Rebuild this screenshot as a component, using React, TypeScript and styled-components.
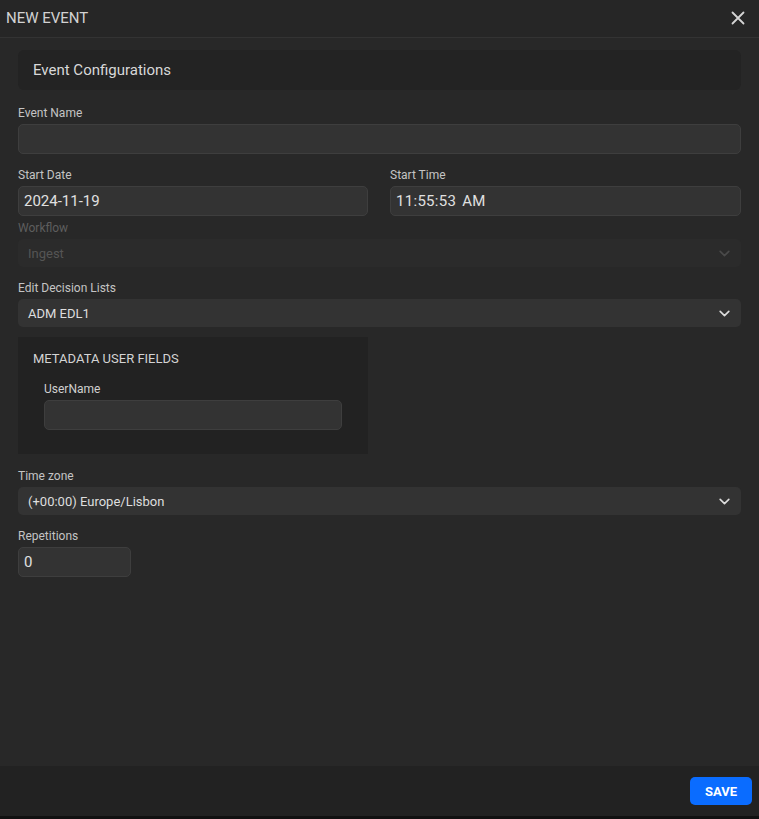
import React, { useState } from "react";
import styled, { createGlobalStyle } from "styled-components";

const GlobalStyle = createGlobalStyle`
  html, body {
    margin: 0;
    padding: 0;
    background: #282828;
    font-family: Roboto, "Liberation Sans", Arial, sans-serif;
  }
  * { box-sizing: border-box; }
`;

const Chevron: React.FC<{ color?: string }> = ({ color = "#ddd" }) => (
  <svg width="13" height="13" viewBox="0 0 24 24" fill="none">
    <path
      d="M4 8l8 8 8-8"
      stroke={color}
      strokeWidth="3"
      strokeLinecap="round"
      strokeLinejoin="round"
    />
  </svg>
);

const App: React.FC = () => {
  const [eventName, setEventName] = useState("");
  const [userName, setUserName] = useState("");
  const [repetitions, setRepetitions] = useState("0");

  return (
    <Modal>
      <GlobalStyle />
      <Header>
        <Title>NEW EVENT</Title>
        <CloseButton aria-label="close">
          <svg width="14" height="14" viewBox="0 0 14 14">
            <path
              d="M1.5 1.5l11 11M12.5 1.5l-11 11"
              stroke="#d4d4d4"
              strokeWidth="1.8"
              strokeLinecap="round"
            />
          </svg>
        </CloseButton>
      </Header>

      <Body>
        <SectionCard>Event Configurations</SectionCard>

        <Field $top={15}>
          <Label>Event Name</Label>
          <Input
            value={eventName}
            onChange={(e) => setEventName(e.target.value)}
          />
        </Field>

        <Row>
          <Field $top={13}>
            <Label>Start Date</Label>
            <Input defaultValue="2024-11-19" />
          </Field>
          <Field $top={13}>
            <Label>Start Time</Label>
            <Input defaultValue="11:55:53 AM" $spaced />
          </Field>
        </Row>

        <Field $top={4}>
          <Label $disabled>Workflow</Label>
          <Select $disabled>
            <span>Ingest</span>
            <Chevron color="#4a4a4a" />
          </Select>
        </Field>

        <Field $top={13}>
          <Label>Edit Decision Lists</Label>
          <Select>
            <span>ADM EDL1</span>
            <Chevron />
          </Select>
        </Field>

        <MetaBox>
          <MetaTitle>METADATA USER FIELDS</MetaTitle>
          <MetaField>
            <Label $light>UserName</Label>
            <Input
              value={userName}
              onChange={(e) => setUserName(e.target.value)}
            />
          </MetaField>
        </MetaBox>

        <Field $top={14}>
          <Label>Time zone</Label>
          <Select>
            <span>(+00:00) Europe/Lisbon</span>
            <Chevron />
          </Select>
        </Field>

        <Field $top={13} $width={113}>
          <Label>Repetitions</Label>
          <Input
            value={repetitions}
            onChange={(e) => setRepetitions(e.target.value)}
          />
        </Field>
      </Body>

      <Footer>
        <SaveButton type="button">SAVE</SaveButton>
      </Footer>
      <BottomStrip />
    </Modal>
  );
};

export default App;

const Modal = styled.div`
  width: 759px;
  height: 819px;
  display: flex;
  flex-direction: column;
  background: #282828;
  overflow: hidden;
`;

const Header = styled.div`
  height: 38px;
  flex-shrink: 0;
  display: flex;
  align-items: center;
  justify-content: space-between;
  padding: 0 14px 0 6px;
  background: #262626;
  border-bottom: 1px solid #333333;
`;

const Title = styled.div`
  color: #d2d2d2;
  font-size: 15px;
  font-weight: 400;
  margin-top: -2px;
`;

const CloseButton = styled.button`
  background: none;
  border: none;
  padding: 0;
  display: flex;
  cursor: pointer;
  margin-top: -2px;
`;

const Body = styled.div`
  flex: 1;
  display: flex;
  flex-direction: column;
  padding: 12px 18px 0 18px;
`;

const SectionCard = styled.div`
  height: 40px;
  display: flex;
  align-items: center;
  padding-left: 15px;
  background: #232323;
  border-radius: 6px;
  color: #d8d8d8;
  font-size: 15px;
`;

const Row = styled.div`
  display: grid;
  grid-template-columns: 350px 351px;
  column-gap: 22px;
`;

const Field = styled.div<{ $top: number; $width?: number }>`
  display: flex;
  flex-direction: column;
  margin-top: ${(p) => p.$top}px;
  width: ${(p) => (p.$width ? `${p.$width}px` : "auto")};
`;

const Label = styled.label<{ $disabled?: boolean; $light?: boolean }>`
  font-size: 12px;
  line-height: 16px;
  margin-bottom: 3px;
  color: ${(p) => (p.$disabled ? "#5e5e5e" : p.$light ? "#d0d0d0" : "#c4c4c4")};
`;

const Input = styled.input<{ $spaced?: boolean }>`
  height: 30px;
  width: 100%;
  background: #333333;
  border: 1px solid #3e3e3e;
  border-radius: 5px;
  color: #e0e0e0;
  font-family: Roboto, "Liberation Sans", Arial, sans-serif;
  font-size: 15px;
  padding: 0 5px;
  outline: none;
  word-spacing: ${(p) => (p.$spaced ? "2px" : "0")};
  letter-spacing: ${(p) => (p.$spaced ? "0.3px" : "0")};
`;

const Select = styled.div<{ $disabled?: boolean }>`
  height: 28px;
  display: flex;
  align-items: center;
  justify-content: space-between;
  padding: 0 10px 0 10px;
  border-radius: 5px;
  background: ${(p) => (p.$disabled ? "#2b2b2b" : "#333333")};
  color: ${(p) => (p.$disabled ? "#555555" : "#dedede")};
  font-size: 13px;
`;

const MetaBox = styled.div`
  width: 350px;
  margin-top: 10px;
  padding: 14px 26px 24px 15px;
  background: #222222;
`;

const MetaTitle = styled.div`
  color: #d4d4d4;
  font-size: 13px;
  font-weight: 400;
  line-height: 16px;
`;

const MetaField = styled.div`
  display: flex;
  flex-direction: column;
  margin: 14px 0 0 11px;
`;

const Footer = styled.div`
  height: 50px;
  flex-shrink: 0;
  display: flex;
  justify-content: flex-end;
  align-items: flex-start;
  padding: 11px 7px 0 0;
  background: #222222;
`;

const SaveButton = styled.button`
  width: 62px;
  height: 28px;
  border: none;
  border-radius: 5px;
  background: #0a6cff;
  color: #ffffff;
  font-family: Roboto, "Liberation Sans", Arial, sans-serif;
  font-size: 13px;
  font-weight: 700;
  cursor: pointer;
  transition: background-color 0.3s;

  &:hover {
    background: #005be0;
  }
`;

const BottomStrip = styled.div`
  height: 3px;
  flex-shrink: 0;
  background: #111111;
`;
